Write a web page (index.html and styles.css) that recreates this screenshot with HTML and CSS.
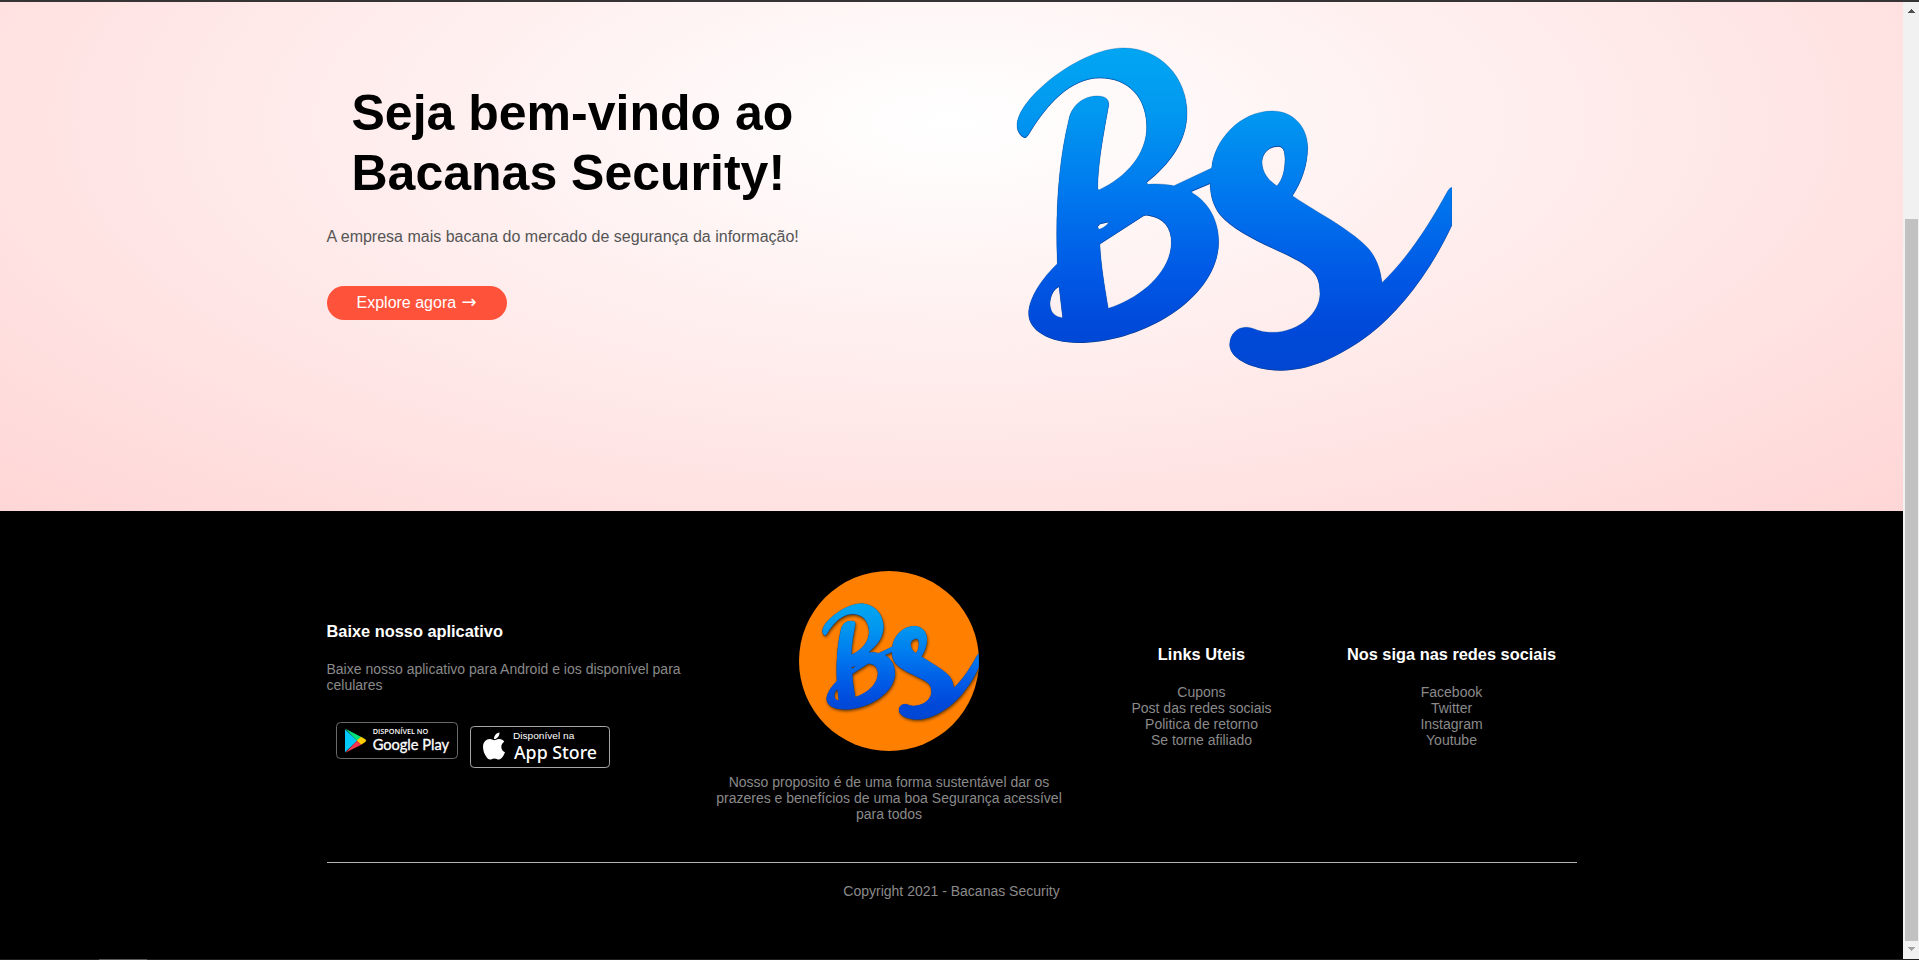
FILE: index.html
```html
<!DOCTYPE html>
<html lang="pt-BR">
<head>
<meta charset="utf-8">
<title>Bacanas Security</title>
<link rel="stylesheet" href="styles.css">
</head>
<body>
<svg class="defs" width="0" height="0" aria-hidden="true">
  <defs>
    <linearGradient id="brand-blue" gradientUnits="userSpaceOnUse" x1="0" y1="52" x2="0" y2="1021">
      <stop offset="0" stop-color="#02a6f2"/>
      <stop offset=".2" stop-color="#0198f0"/>
      <stop offset=".45" stop-color="#0078ee"/>
      <stop offset=".68" stop-color="#005be6"/>
      <stop offset=".85" stop-color="#004ada"/>
      <stop offset="1" stop-color="#0046d2"/>
    </linearGradient>
    <path id="mark" fill-rule="evenodd" d="M77 321C68 323 51 306 51 285C52 245 92 195 150 148C215 97 300 53 370 53C480 53 561 140 561 248C561 330 510 400 440 455L443 462C470 459 500 462 522 466L635 413C642 330 720 242 817 242C880 242 922 290 923 350C923 400 907 450 877 496C930 533 980 558 1030 593C1080 627 1108 653 1120 675C1138 705 1142 730 1146 757C1220 685 1280 597 1343 482Q1349 472 1356 471L1356 583C1290 725 1200 840 1110 910C1010 985 920 1020 840 1019C760 1018 690 985 689 943C690 910 712 892 735 891C765 890 768 906 818 906C900 905 960 845 960 790C960 730 940 712 860 672C790 640 700 600 660 552C640 525 632 500 630 459L575 482L577 488C625 515 656 570 656 633C656 800 430 936 235 936C150 936 86 900 86 850C86 800 130 740 172 700C166 550 174 400 207 265C215 226 250 197 290 197C315 197 328 205 326 225C305 340 295 400 293 476L298 478C380 440 440 370 440 290C440 200 385 142 300 142C210 142 140 225 93 300Q84 316 77 321ZM295 594L293 588L300 580L327 574C322 584 310 593 297 597ZM300 640L430 556Q437 552 448 555C490 562 514 590 514 635C514 720 430 800 325 834C312 760 303 700 300 648ZM177 768C160 775 150 800 150 820C150 845 165 860 188 862ZM830 466C805 450 786 425 786 395C786 370 805 347 835 347C850 347 855 362 855 385C855 420 848 445 833 464Z"/>
    <g id="brand" transform="translate(144 217)">
      <use href="#mark" fill="#06389c" transform="translate(0 2)"/>
      <use href="#mark" fill="url(#brand-blue)"/>
      <use href="#mark" fill="none" stroke="#0a4f96" stroke-opacity=".45" stroke-width="2"/>
    </g>
    <filter id="shade" x="-10%" y="-10%" width="120%" height="120%">
      <feGaussianBlur stdDeviation="14"/>
    </filter>
  </defs>
</svg>
<div class="window">
  <div class="page">
    <section class="hero">
      <div class="row">
        <div class="hero-text">
          <h1>Seja bem-vindo ao<br>Bacanas Security!</h1>
          <p>A empresa mais bacana do mercado de segurança da informação!</p>
          <a class="btn">Explore agora <span class="go">→</span></a>
        </div>
        <div class="hero-logo">
          <svg class="logo" viewBox="0 132 1500 1368"><use href="#brand"/></svg>
        </div>
      </div>
    </section>
    <footer class="footer">
      <div class="row footer-row">
        <div class="col wide apps">
          <h3>Baixe nosso aplicativo</h3>
          <p>Baixe nosso aplicativo para Android e ios disponível para celulares</p>
          <div class="stores">
            <svg class="google" viewBox="0 0 366 111">
              <rect x="1.5" y="1.5" width="363" height="108" rx="12" fill="#000" stroke="#6a6a6a" stroke-width="3"/>
              <path fill="#00c8f8" d="M27 22L64 56L27 91Z"/>
              <path fill="#00e27a" d="M28 20L76 45L64 57Z"/>
              <path fill="#ffce00" d="M75 44L88 52Q93 56 88 60L75 68L62 56Z"/>
              <path fill="#f5364c" d="M28 92L63 56L76 68Z"/>
              <text x="110" y="35" class="g-small" textLength="167" lengthAdjust="spacingAndGlyphs">DISPONÍVEL NO</text>
              <text x="110" y="84" class="g-big" textLength="229" lengthAdjust="spacingAndGlyphs">Google Play</text>
            </svg>
            <svg class="apple" viewBox="0 0 420 126">
              <rect x="1.5" y="1.5" width="417" height="123" rx="11" fill="#000" stroke="#a6a6a6" stroke-width="3"/>
              <path fill="#fff" transform="translate(38.300 14) scale(.175 .18)" d="M318.700 268.700c-.2-36.700 16.400-64.400 50-84.800-18.800-26.900-47.200-41.700-84.700-44.600-35.500-2.800-74.300 20.700-88.500 20.700-15 0-49.400-19.700-76.400-19.700C63.300 141.200 4 184.800 4 273.500q0 39.300 14.400 81.200c12.800 36.700 59 126.700 107.200 125.200 25.200-.6 43-17.900 75.800-17.900 31.800 0 48.300 17.900 76.400 17.900 48.600-.7 90.400-82.500 102.600-119.300-65.200-30.700-61.700-90-61.700-91.900zm-56.600-164.200c27.300-32.400 24.800-61.900 24-72.500-24.100 1.400-52 16.400-67.900 34.900-17.500 19.800-27.800 44.300-25.600 71.900 26.100 2 49.900-11.400 69.500-34.300z"/>
              <text x="129" y="40" class="a-small" textLength="184" lengthAdjust="spacingAndGlyphs">Disponível na</text>
              <text x="132" y="99" class="a-big" textLength="249" lengthAdjust="spacingAndGlyphs">App Store</text>
            </svg>
          </div>
        </div>
        <div class="col wide center about">
          <svg class="seal" viewBox="0 0 1500 1500">
            <rect width="1500" height="1500" fill="#ff8000"/>
            <use href="#mark" transform="translate(150 232)" fill="#3c2600" opacity=".8" filter="url(#shade)"/>
            <use href="#brand"/>
          </svg>
          <p>Nosso proposito é de uma forma sustentável dar os prazeres e benefícios de uma boa Segurança acessível para todos</p>
        </div>
        <div class="col center links">
          <h3>Links Uteis</h3>
          <ul>
            <li>Cupons</li>
            <li>Post das redes sociais</li>
            <li>Politica de retorno</li>
            <li>Se torne afiliado</li>
          </ul>
        </div>
        <div class="col center links">
          <h3>Nos siga nas redes sociais</h3>
          <ul>
            <li>Facebook</li>
            <li>Twitter</li>
            <li>Instagram</li>
            <li>Youtube</li>
          </ul>
        </div>
      </div>
      <hr>
      <p class="copyright">Copyright 2021 - Bacanas Security</p>
    </footer>
  </div>
  <div class="scrollbar">
    <svg class="arrow" viewBox="0 0 7 4" shape-rendering="crispEdges"><path fill="#505050" d="M3 0h1v1h1v1h1v1h1v1H0V3h1V2h1V1h1z"/></svg>
    <div class="thumb"></div>
    <svg class="arrow" viewBox="0 0 7 4" shape-rendering="crispEdges"><path fill="#a3a3a3" d="M0 0h7v1H6v1H5v1H4v1H3V3H2V2H1V1H0z"/></svg>
  </div>
</div>
<div class="taskbar"><span></span></div>
</body>
</html>
```

FILE: styles.css
```css
* { box-sizing: border-box; margin: 0; padding: 0; }
body {
  height: 960px;
  overflow: hidden;
  background: #000;
  font-family: "Liberation Sans", Arial, sans-serif;
}
.defs { position: absolute; }
.window {
  display: flex;
  height: 959px;
  border-top: 2px solid #353334;
}
.page { width: 1903px; }
.row { display: flex; width: 1250px; margin: 0 auto; }
.hero {
  height: 509px;
  background: radial-gradient(ellipse 1345px 549px at 951px 121px, #fff, #ffd6d6);
}
.hero-text, .hero-logo { width: 625px; }
.hero-text { padding-top: 81px; }
h1 {
  padding-left: 25px;
  font-size: 50px;
  line-height: 60px;
  color: #000;
}
.hero-text p {
  margin-top: 25px;
  font-size: 16px;
  line-height: 18px;
  color: #555;
}
.btn {
  display: block;
  width: 180px;
  height: 34px;
  margin-top: 40px;
  padding: 8px 0 8px 30px;
  border-radius: 30px;
  background: #ff523b;
  color: #fff;
  font-size: 16px;
  line-height: 18px;
  white-space: nowrap;
}
.go { margin-left: 1px; font: 18px/1px "DejaVu Sans", sans-serif; }
.logo { display: block; width: 500px; height: 456px; }
.footer {
  height: 448px;
  padding-top: 60px;
  background: #000;
  color: #8a8a8a;
  font-size: 14px;
  line-height: 16px;
}
.footer-row { height: 252px; align-items: center; }
.col { width: 250px; }
.wide { width: 375px; }
.center { text-align: center; }
.links { padding-bottom: 2px; }
.apps, .about { padding-bottom: 1px; }
h3 {
  margin-bottom: 20px;
  color: #fff;
  font-size: 16.38px;
  line-height: 19px;
}
ul { list-style: none; }
.stores {
  display: flex;
  align-items: flex-start;
  gap: 12px;
  height: 78px;
  padding: 29px 0 0 9px;
}
.google { width: 122px; height: 37px; }
.apple { width: 140px; height: 42px; margin-top: 4px; }
.g-small, .g-big, .a-small, .a-big { fill: #fff; }
.g-small { font: 600 22px "Open Sans", sans-serif; }
.g-big { font: 400 47px Lato, sans-serif; stroke: #fff; stroke-width: 1; }
.a-small { font: 27px "Liberation Sans", sans-serif; }
.a-big { font: 500 56px "Noto Sans", sans-serif; }
.seal {
  display: block;
  width: 180px;
  height: 180px;
  margin: 0 auto 23px;
  border-radius: 50%;
}
hr {
  width: 1250px;
  height: 1px;
  margin: 39px auto 20px;
  border: 0;
  background: #b5b5b5;
}
.copyright { text-align: center; }
.scrollbar {
  display: flex;
  flex-direction: column;
  align-items: center;
  width: 16px;
  padding: 7px 0 8px;
  background: #f1f1f1;
}
.arrow { width: 7px; height: 4px; }
.thumb {
  width: 13px;
  height: 723px;
  margin: 206px 0 6px;
  background: #c1c1c1;
}
.taskbar { height: 1px; padding-left: 99px; background: #221d1f; }
.taskbar span { display: block; width: 48px; height: 1px; background: #5a5859; }
```
